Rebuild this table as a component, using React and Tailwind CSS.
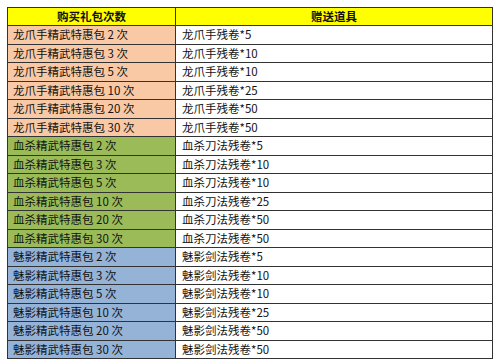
const groups = [
  { name: "龙爪手精武特惠包", item: "龙爪手残卷", bg: "bg-[#f9c9a6]" },
  { name: "血杀精武特惠包", item: "血杀刀法残卷", bg: "bg-[#9bbb59]" },
  { name: "魅影精武特惠包", item: "魅影剑法残卷", bg: "bg-[#95b3d7]" },
];

const tiers = [
  { times: 2, count: 5 },
  { times: 3, count: 10 },
  { times: 5, count: 10 },
  { times: 10, count: 25 },
  { times: 20, count: 50 },
  { times: 30, count: 50 },
];

export default function App() {
  return (
    <div
      className="w-[500px] h-[359px] bg-white pt-[7px] pl-[7px] text-[#111] text-[11.5px]"
      style={{ fontFamily: '"Noto Sans CJK SC", "Noto Sans", sans-serif' }}
    >
      <div className="w-[486px] border border-[#333] border-b-0">
        {/* header */}
        <div className="grid grid-cols-[168px_1fr] h-[18px] bg-[#ffff00] border-b border-[#333] font-bold">
          <div className="flex items-center justify-center border-r border-[#333]">购买礼包次数</div>
          <div className="flex items-center justify-center">赠送道具</div>
        </div>

        {groups.map((g) =>
          tiers.map((t) => (
            <div
              key={g.name + t.times}
              className="grid grid-cols-[168px_1fr] h-[18.5px] border-b border-[#333]"
            >
              <div className={"flex items-center pl-[5px] border-r border-[#333] " + g.bg}>
                {g.name} {t.times} 次
              </div>
              <div className="flex items-center pl-[6px]">
                {g.item}*{t.count}
              </div>
            </div>
          ))
        )}
      </div>
    </div>
  );
}
